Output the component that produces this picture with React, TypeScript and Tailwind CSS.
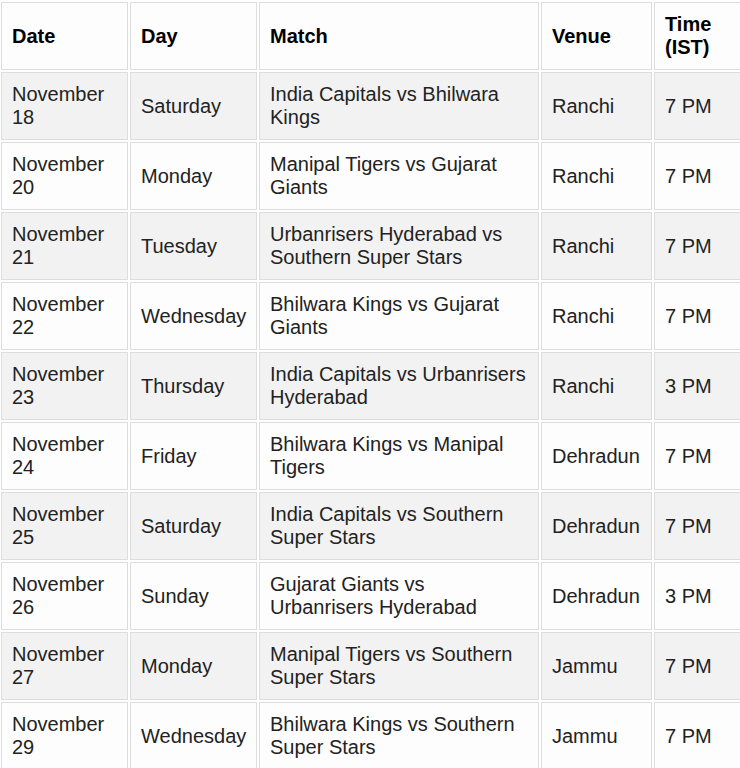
import * as React from "react";

const MATCHES = [
  { date: "November 18", day: "Saturday", match: "India Capitals vs Bhilwara Kings", venue: "Ranchi", time: "7 PM" },
  { date: "November 20", day: "Monday", match: "Manipal Tigers vs Gujarat Giants", venue: "Ranchi", time: "7 PM" },
  { date: "November 21", day: "Tuesday", match: "Urbanrisers Hyderabad vs Southern Super Stars", venue: "Ranchi", time: "7 PM" },
  { date: "November 22", day: "Wednesday", match: "Bhilwara Kings vs Gujarat Giants", venue: "Ranchi", time: "7 PM" },
  { date: "November 23", day: "Thursday", match: "India Capitals vs Urbanrisers Hyderabad", venue: "Ranchi", time: "3 PM" },
  { date: "November 24", day: "Friday", match: "Bhilwara Kings vs Manipal Tigers", venue: "Dehradun", time: "7 PM" },
  { date: "November 25", day: "Saturday", match: "India Capitals vs Southern Super Stars", venue: "Dehradun", time: "7 PM" },
  { date: "November 26", day: "Sunday", match: "Gujarat Giants vs Urbanrisers Hyderabad", venue: "Dehradun", time: "3 PM" },
  { date: "November 27", day: "Monday", match: "Manipal Tigers vs Southern Super Stars", venue: "Jammu", time: "7 PM" },
  { date: "November 29", day: "Wednesday", match: "Bhilwara Kings vs Southern Super Stars", venue: "Jammu", time: "7 PM" },
];

const cell = "border border-[#dddddd] p-[10px] align-middle text-left";

export default function App() {
  return (
    <div className="h-[768px] w-[740px] overflow-hidden bg-white font-['Liberation_Sans',Arial,sans-serif] text-[20px] leading-[23px] text-[#222222]">
      <table className="-ml-px w-[757px] table-fixed border-separate border-spacing-[2px]">
        <thead>
          <tr className="bg-[#fdfdfd] font-bold text-black">
            <th className={`${cell} w-[127px]`}>Date</th>
            <th className={`${cell} w-[127px]`}>Day</th>
            <th className={`${cell} w-[280px]`}>Match</th>
            <th className={`${cell} w-[111px]`}>Venue</th>
            <th className={`${cell} w-[100px]`}>
              Time
              <br />
              (IST)
            </th>
          </tr>
        </thead>
        <tbody>
          {MATCHES.map((m, i) => (
            <tr key={m.date} className={i % 2 === 0 ? "bg-[#f2f2f2]" : "bg-[#fdfdfd]"}>
              <td className={cell}>{m.date}</td>
              <td className={cell}>{m.day}</td>
              <td className={cell}>{m.match}</td>
              <td className={cell}>{m.venue}</td>
              <td className={cell}>{m.time}</td>
            </tr>
          ))}
        </tbody>
      </table>
    </div>
  );
}
